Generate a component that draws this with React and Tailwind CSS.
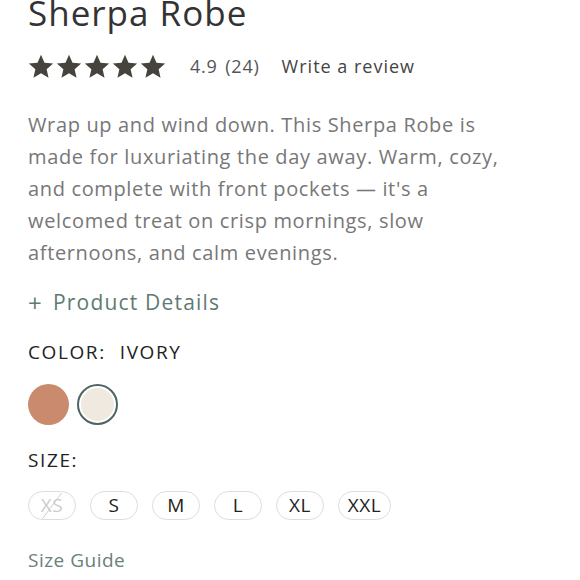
import React from 'react';

const font = { fontFamily: '"Open Sans", "Liberation Sans", sans-serif' };

function Star() {
  return (
    <svg viewBox="0 0 24 24" className="w-[28px] h-[27px] fill-[#46423c]">
      <path d="M12 1.5l3.1 7.1 7.7.7-5.8 5.1 1.7 7.6L12 18l-6.7 4 1.7-7.6-5.8-5.1 7.7-.7z" />
    </svg>
  );
}

const sizes = ['XS', 'S', 'M', 'L', 'XL', 'XXL'];

export default function App() {
  return (
    <div className="w-[580px] h-[580px] overflow-hidden bg-white px-[28px]" style={font}>
      <h1 className="text-[35px] leading-[40px] -mt-[7px] text-[#333] tracking-[1px]">Sherpa Robe</h1>

      <div className="flex items-center mt-[19px] h-[28px]">
        <div className="flex -ml-[1px]">
          {[0, 1, 2, 3, 4].map(i => <Star key={i} />)}
        </div>
        <span className="ml-[23px] text-[18px] text-[#555] tracking-[0.8px]">4.9 <span className="ml-[2px]">(24)</span></span>
        <span className="ml-[22px] text-[18px] text-[#444] tracking-[1px]">Write a review</span>
      </div>

      <p className="mt-[29px] w-[500px] text-[20px] leading-[32px] text-[#777] tracking-[0.65px]">
        Wrap up and wind down. This Sherpa Robe is made for luxuriating the day away. Warm, cozy, and complete with front pockets — it's a welcomed treat on crisp mornings, slow afternoons, and calm evenings.
      </p>

      <div className="mt-[20px] h-[28px] flex items-center text-[21px] text-[#5f7a72] tracking-[1.2px]">
        <span className="text-[24px] leading-none mr-[10px]">+</span>
        Product Details
      </div>

      <div className="mt-[21px] h-[28px] flex items-center text-[19px] text-[#222] tracking-[1.6px]">
        COLOR:<span className="ml-[14px]">IVORY</span>
      </div>

      <div className="flex gap-[8px] mt-[18px]">
        <div className="w-[41px] h-[41px] rounded-full bg-[#c98a6e]" />
        <div className="w-[41px] h-[41px] rounded-full bg-[#efe9df] border-[2px] border-[#4d6664] ring-2 ring-white ring-inset" />
      </div>

      <div className="mt-[21px] h-[28px] flex items-center text-[19px] text-[#222] tracking-[1.6px]">SIZE:</div>

      <div className="flex gap-[14px] mt-[17px]">
        {sizes.map(s => (
          <div
            key={s}
            className={`relative h-[29px] ${s === 'XXL' ? 'w-[53px]' : 'w-[48px]'} rounded-full border border-[#ddd] flex items-center justify-center text-[19px] tracking-[0.5px] ${s === 'XS' ? 'text-[#ccc] overflow-hidden' : 'text-[#222]'}`}
          >
            {s}
            {s === 'XS' && (
              <svg className="absolute inset-0" viewBox="0 0 48 29" preserveAspectRatio="none">
                <line x1="14" y1="28" x2="34" y2="1" stroke="#ccc" strokeWidth="1" />
              </svg>
            )}
          </div>
        ))}
      </div>

      <div className="mt-[26px] h-[28px] flex items-center text-[19px] text-[#6b7f7a] tracking-[0.5px]">Size Guide</div>
    </div>
  );
}
